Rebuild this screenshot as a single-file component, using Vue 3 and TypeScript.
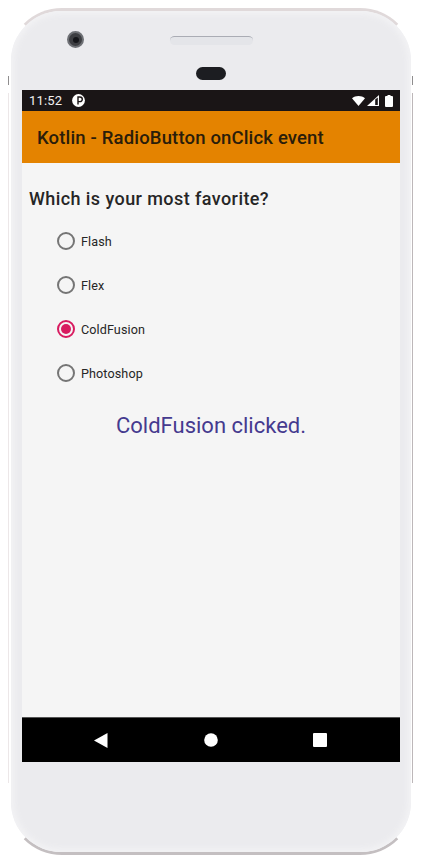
<script setup lang="ts">
const options = [
  { label: 'Flash', checked: false },
  { label: 'Flex', checked: false },
  { label: 'ColdFusion', checked: true },
  { label: 'Photoshop', checked: false },
]
</script>

<template>
  <div class="page">
    <div class="frame">
      <span class="edge edge-left"></span>
      <span class="edge edge-right"></span>
      <span class="tick tick-left"></span>
      <span class="tick tick-right"></span>
      <div class="phone">
        <span class="camera"><span class="lens"></span></span>
        <span class="speaker"></span>
        <span class="sensor"></span>
        <div class="screen">
          <div class="status">
            <span class="time">11:52</span>
            <svg class="app-icon" width="13" height="13" viewBox="0 0 13 13">
              <circle cx="6.5" cy="6.5" r="6.4" fill="#fff" />
              <path d="M6 10.500V3h2a2.300 2.300 0 0 1 0 4.600H6" fill="none" stroke="#1a1516" stroke-width="1.400" />
            </svg>
            <span class="status-right">
              <svg class="wifi" width="13" height="10" viewBox="0 0 13 10"><path d="M0 2.300C1.800.8 4 0 6.500 0S11.200.8 13 2.300L6.500 10z" fill="#fff" /></svg>
              <svg class="signal" width="12" height="11" viewBox="0 0 12 11"><path d="M12 0v11H0z" fill="#fff" /><path d="M8.200 4.600L10.800 2.600V10H8.200z" fill="#1a1516" /></svg>
              <svg class="battery" width="8" height="12" viewBox="0 0 8 12"><path d="M2.500 0h3v1H7a1 1 0 0 1 1 1v9a1 1 0 0 1-1 1H1a1 1 0 0 1-1-1V2a1 1 0 0 1 1-1h1.500z" fill="#fff" /></svg>
            </span>
          </div>
          <div class="toolbar">Kotlin - RadioButton onClick event</div>
          <div class="content">
            <h1 class="question">Which is your most favorite?</h1>
            <div class="options">
              <label v-for="o in options" :key="o.label" class="option">
                <span class="radio" :class="{ checked: o.checked }"></span>
                <span class="label">{{ o.label }}</span>
              </label>
            </div>
            <p class="result">ColdFusion clicked.</p>
          </div>
          <div class="nav">
            <svg width="14" height="15" viewBox="0 0 14 15"><path d="M13.500 0v15L0 7.500z" fill="#fff" /></svg>
            <svg width="14" height="14" viewBox="0 0 14 14"><circle cx="7" cy="7" r="6.800" fill="#fff" /></svg>
            <svg width="14" height="14" viewBox="0 0 14 14"><rect width="14" height="14" rx="1" fill="#fff" /></svg>
          </div>
        </div>
      </div>
    </div>
  </div>
</template>

<style scoped>
.page {
  width: 422px;
  height: 862px;
  background: #fff;
  padding: 8px 8px 7px;
  box-sizing: border-box;
  overflow: hidden;
  font-family: Roboto, "Liberation Sans", sans-serif;
}
.frame {
  position: relative;
  width: 406px;
  height: 847px;
  box-sizing: border-box;
  border: 3px solid transparent;
  border-top-color: #e0d9da;
  border-bottom-color: #c4bfc1;
  border-radius: 54px;
}
.edge {
  position: absolute;
  top: 82px;
  height: 690px;
  width: 1px;
}
.edge-left {
  left: -3px;
  background: #ece7e8;
}
.edge-right {
  right: -2px;
  background: #bdb7b9;
}
.tick {
  position: absolute;
  top: 65px;
  height: 9px;
  width: 1px;
  background: #8f8d8e;
}
.tick-left {
  left: -3px;
}
.tick-right {
  right: -2px;
}
.phone {
  position: relative;
  height: 100%;
  box-sizing: border-box;
  padding: 79px 11px 0;
  background: #ebebee;
  border-radius: 50px;
  box-shadow: inset 0 0 6px 3px #f3f3f5;
}
.camera {
  position: absolute;
  left: 56px;
  top: 20px;
  width: 17px;
  height: 17px;
  box-sizing: border-box;
  border: 2px solid #6e7075;
  border-radius: 50%;
  background: #3d3e42;
  display: flex;
  align-items: center;
  justify-content: center;
}
.lens {
  width: 6px;
  height: 6px;
  border-radius: 50%;
  background: #15161a;
}
.speaker {
  position: absolute;
  left: 159px;
  top: 25px;
  width: 83px;
  height: 9px;
  box-sizing: border-box;
  border-radius: 5px;
  background: #e4e5e9;
  border-top: 1px solid #aaacb4;
}
.sensor {
  position: absolute;
  left: 185px;
  top: 56px;
  width: 30px;
  height: 13px;
  border-radius: 7px;
  background: #1c1d21;
}
.screen {
  width: 378px;
  display: flex;
  flex-direction: column;
}
.status {
  height: 21px;
  background: #1a1516;
  display: flex;
  align-items: center;
  padding: 0 7px;
  color: #f2f0f0;
  font-size: 13px;
}
.time {
  letter-spacing: 0.15px;
}
.app-icon {
  margin-left: 10px;
}
.status-right {
  margin-left: auto;
  display: flex;
  align-items: center;
}
.signal {
  margin-left: 2px;
}
.battery {
  margin-left: 6px;
}
.toolbar {
  height: 52px;
  padding-top: 1px;
  box-sizing: border-box;
  background: #e48300;
  color: #2a1d0a;
  display: flex;
  align-items: center;
  padding-left: 15px;
  font-size: 18.5px;
  font-weight: 500;
  letter-spacing: 0.16px;
}
.content {
  height: 554px;
  background: #f5f5f5;
  box-sizing: border-box;
  padding: 24px 0 0 8px;
}
.question {
  margin: 0 0 0 -1px;
  font-size: 18px;
  line-height: 24px;
  font-weight: 500;
  color: #262626;
  letter-spacing: 0.42px;
}
.options {
  margin: 8px 0 0 27px;
  display: flex;
  flex-direction: column;
}
.option {
  height: 44px;
  display: flex;
  align-items: center;
  gap: 6px;
}
.radio {
  width: 18px;
  height: 18px;
  box-sizing: border-box;
  border: 2px solid #757575;
  border-radius: 50%;
  display: flex;
  align-items: center;
  justify-content: center;
}
.radio.checked {
  border-color: #d81b60;
}
.radio.checked::after {
  content: "";
  width: 10px;
  height: 10px;
  border-radius: 50%;
  background: #d81b60;
}
.label {
  font-size: 12.6px;
  color: #262626;
  letter-spacing: 0.1px;
}
.result {
  margin: 16px 0 0 -8px;
  text-align: center;
  font-size: 22px;
  line-height: 30px;
  color: #453a8f;
}
.nav {
  height: 45px;
  background: #000;
  border-top: 1px solid #555;
  box-sizing: border-box;
  display: flex;
  align-items: center;
  justify-content: space-between;
  padding: 0 73px 0 72px;
}
</style>

<style>
html, body {
  margin: 0;
  background: #fff;
}
</style>
